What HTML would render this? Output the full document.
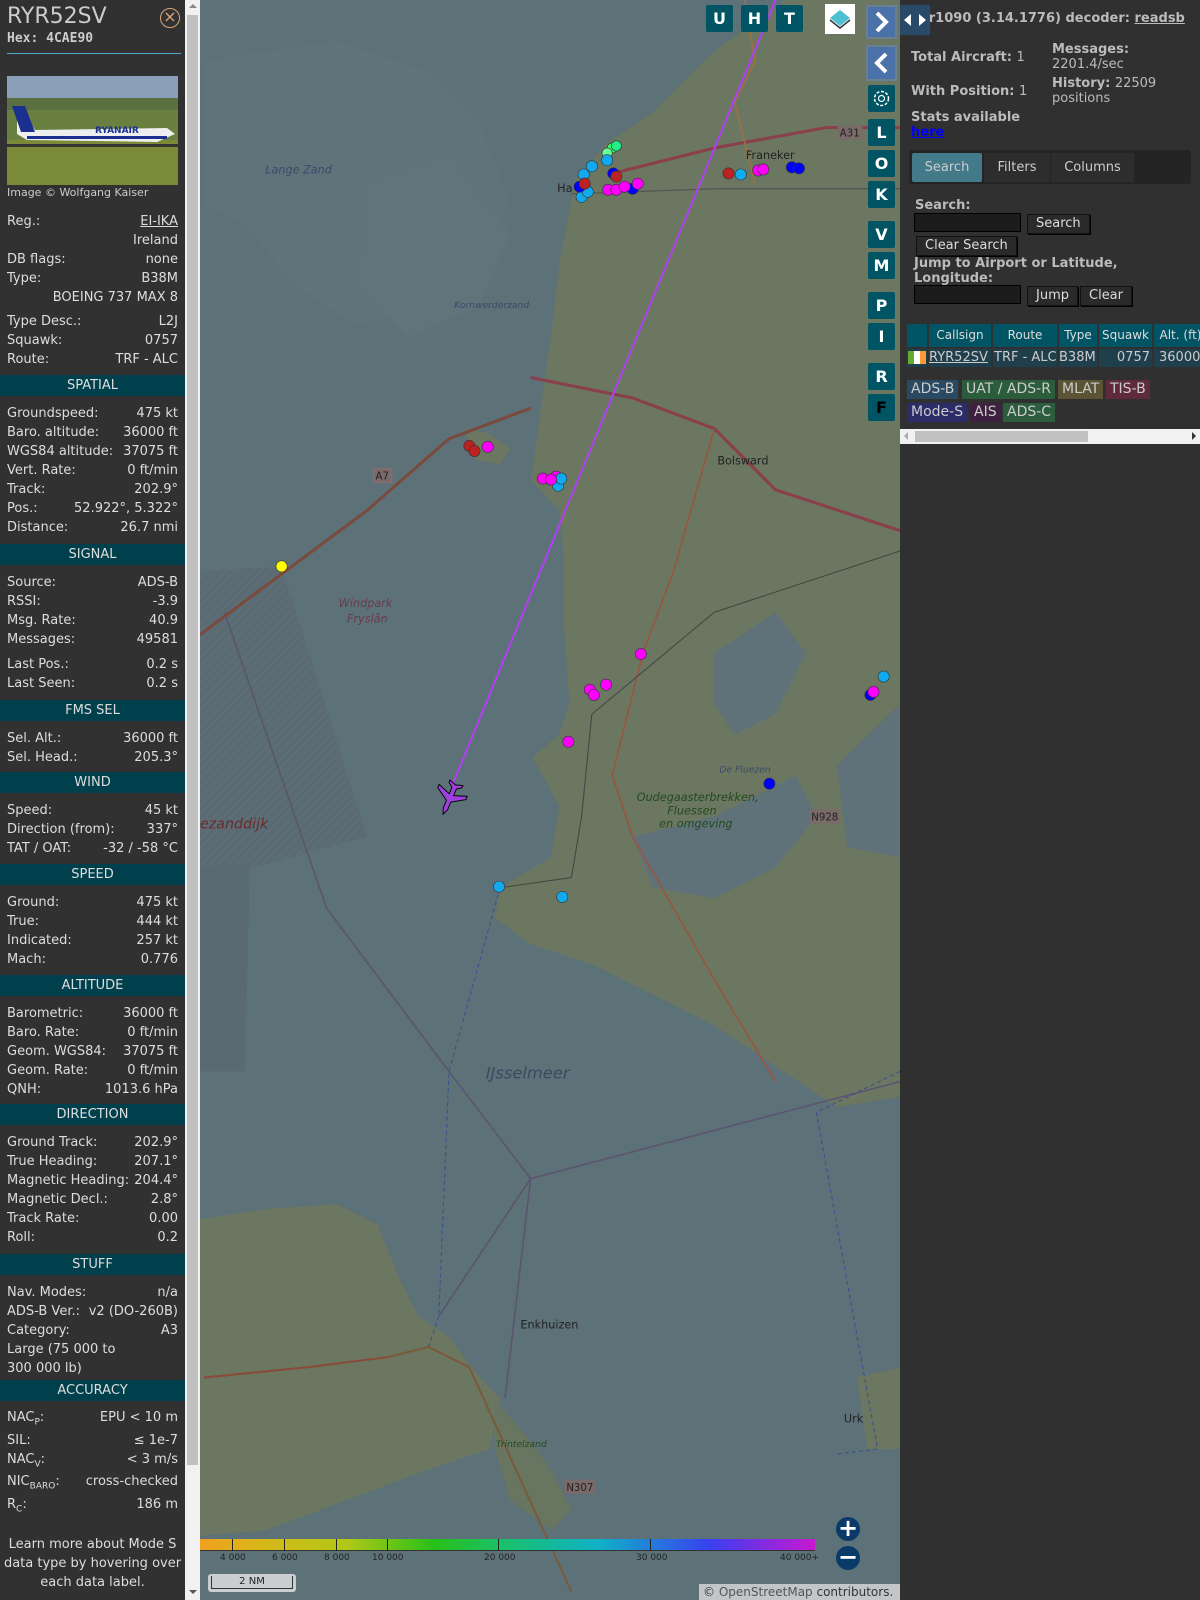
<!DOCTYPE html>
<html><head><meta charset="utf-8"><style>
*{box-sizing:border-box;margin:0;padding:0}
body{width:1200px;height:1600px;overflow:hidden;background:#5d7178;font-family:"DejaVu Sans","Liberation Sans",sans-serif;font-size:13px;color:#ddd;position:relative}
#map{position:absolute;left:0;top:0;width:1200px;height:1600px}
#lp{position:absolute;left:0;top:0;width:185px;height:1600px;background:#313131}
#sb{position:absolute;left:185px;top:0;width:15px;height:1600px;background:#f1f1f1}
#sb .th{position:absolute;left:2px;top:15px;width:11px;height:1450px;background:#c1c1c1}
.abs{position:absolute}
.r{height:19px;line-height:19px;position:relative;padding:0 7px;white-space:nowrap}
.r .v{position:absolute;right:7px;top:0}
.ra{position:absolute;left:0;width:185px;height:19px;line-height:19px;padding:0 7px;white-space:nowrap}
.ra .v{position:absolute;right:7px;top:0}
.ra sub{font-size:9px;line-height:0}
.h{height:21px;line-height:21px;background:#00404d;text-align:center;color:#ddd;font-size:13px}
.sec{position:absolute;left:0;width:185px}
.sec .rows{padding-top:8px}
#rp{position:absolute;left:900px;top:0;width:300px;height:1600px;background:#303030}
.b{font-weight:bold;color:#bbb}
.mb{position:absolute;width:27px;height:27px;background:#005463;color:#fff;font-weight:bold;font-size:16px;text-align:center;line-height:27px;border-radius:2px}
.btn{position:absolute;background:#2a2a2a;border:1px solid #111;color:#ddd;height:20px;line-height:18px;padding:0 8px;font-size:13px;box-shadow:1px 1px 0 #000}
.inp{position:absolute;background:#1c1c1c;border:1px solid #000;height:19px}
.lg{position:absolute;height:19px;line-height:19px;padding:0 4px;font-size:14px;color:#ccc}
.td{position:absolute;height:18px;background:#1f3f4d;white-space:nowrap;overflow:hidden}
</style></head><body>
<svg id="map" viewBox="0 0 1176 1568" preserveAspectRatio="none">
<defs><pattern id="hz" width="6" height="6" patternUnits="userSpaceOnUse" patternTransform="rotate(45)"><rect width="6" height="6" fill="#5a6a72"/><line x1="0" y1="0" x2="0" y2="6" stroke="#62707a" stroke-width="2"/></pattern></defs>
<rect width="1176" height="1568" fill="#5d7178"/>
<path d="M200,60 L330,40 L420,70 L470,120 L500,200 L460,260 L420,300 L350,320 L290,280 L240,220 L200,200Z" fill="#5f737a"/>
<path d="M360,180 L440,150 L500,230 L470,300 L400,330 L350,280Z" fill="#60747b"/>
<path d="M770,0 L882,0 L882,1075 L820,1085 L760,1045 L700,1005 L640,975 L580,945 L520,925 L485,900 L490,870 L540,840 L548,790 L522,742 L548,720 L558,690 L553,620 L552,540 L548,500 L520,470 L525,440 L530,400 L540,330 L548,260 L558,205 L565,175 L595,140 L640,110 L700,50Z" fill="#6b7760"/>
<path d="M455,420 L480,425 L500,440 L490,455 L465,450Z" fill="#6b7760"/>
<path d="M700,640 L760,600 L790,640 L760,700 L720,720 L700,690Z" fill="#5f7279"/>
<path d="M620,820 L700,800 L780,760 L800,800 L760,850 L700,880 L640,870Z" fill="#5f7279"/>
<path d="M820,750 L882,690 L882,840 L830,830Z" fill="#5f7279"/>
<path d="M196,1195 L260,1185 L330,1180 L370,1200 L390,1250 L410,1290 L440,1310 L470,1350 L490,1370 L480,1420 L420,1440 L340,1470 L260,1500 L196,1505Z" fill="#6b7760"/>
<path d="M483,1370 L510,1400 L540,1440 L560,1480 L540,1500 L500,1470 L485,1420Z" fill="#687560"/>
<path d="M840,1350 L882,1340 L882,1420 L850,1420Z" fill="#6b7760"/>
<path d="M196,560 L276,555 L360,820 L250,850 L196,850Z" fill="url(#hz)" opacity="0.8"/>
<path d="M196,850 L245,845 L240,1050 L196,1050Z" fill="#5a6a72"/>
<g stroke="#5a5470" stroke-width="1.5" fill="none">
<path d="M220,600 L320,890 L440,1050 L520,1155 L882,1060"/>
<path d="M520,1155 L430,1290"/>
<path d="M520,1155 L495,1370"/>
</g>
<g stroke="#3a4f90" stroke-width="1" fill="none" stroke-dasharray="4,3">
<path d="M490,870 L440,1050 L430,1290 L420,1320"/>
<path d="M882,1050 L800,1090 L860,1420 L820,1425"/>
</g>
<g fill="none">
<path d="M196,622 L360,500 L440,430 L520,400" stroke="#7a4a3c" stroke-width="3"/>
<path d="M560,190 L700,185 L882,185" stroke="#555" stroke-width="1.2"/>
<path d="M600,170 L700,145 L810,125 L882,125" stroke="#8a3f4c" stroke-width="3"/>
<path d="M520,370 L620,390 L700,420 L760,480 L882,520" stroke="#8a3f4c" stroke-width="3"/>
<path d="M700,420 L660,560 L630,640 L600,760 L620,820 L700,960 L760,1060" stroke="#9a5540" stroke-width="1.6"/>
<path d="M580,700 L700,600 L882,540" stroke="#444" stroke-width="1"/>
<path d="M490,870 L560,860 L570,800 L580,700" stroke="#444" stroke-width="1"/>
<path d="M730,0 L740,60 L720,100 L740,180" stroke="#a07040" stroke-width="1.5"/>
<path d="M380,1330 L420,1320 L460,1340 L560,1560" stroke="#7a5a3a" stroke-width="2"/>
<path d="M200,1350 L300,1340 L380,1330" stroke="#8a4a3a" stroke-width="2"/>
</g>
<g font-family="DejaVu Sans" font-size="11" font-style="italic" fill="#6a3a50">
<text x="332" y="595">Windpark</text><text x="340" y="610">Fryslân</text>
</g>
<text x="196" y="812" font-family="DejaVu Sans" font-size="14" font-style="italic" fill="#6a2a2a">ezanddijk</text>
<text x="260" y="170" font-family="DejaVu Sans" font-size="11" font-style="italic" fill="#3a4a6a">Lange Zand</text>
<text x="445" y="302" font-family="DejaVu Sans" font-size="9" font-style="italic" fill="#3a4a6a">Kornwerderzand</text>
<text x="476" y="1057" font-family="DejaVu Sans" font-size="16" font-style="italic" fill="#3a4a60">IJsselmeer</text>
<text x="624" y="785" font-family="DejaVu Sans" font-size="11" font-style="italic" fill="#234a20">Oudegaasterbrekken,</text>
<text x="654" y="798" font-family="DejaVu Sans" font-size="11" font-style="italic" fill="#234a20">Fluessen</text>
<text x="646" y="811" font-family="DejaVu Sans" font-size="11" font-style="italic" fill="#234a20">en omgeving</text>
<text x="705" y="757" font-family="DejaVu Sans" font-size="9" font-style="italic" fill="#3a4a6a">De Fluezen</text>
<g font-family="DejaVu Sans" font-size="11" fill="#222">
<text x="731" y="156">Franeker</text><text x="703" y="455">Bolsward</text><text x="510" y="1302">Enkhuizen</text><text x="827" y="1394">Urk</text><text x="546" y="188">Ha</text>
</g>
<text x="486" y="1418" font-family="DejaVu Sans" font-size="9" font-style="italic" fill="#234a20">Trintelzand</text>
<g font-family="DejaVu Sans" font-size="10"><rect x="366" y="459" width="18" height="14" fill="#7a6a6a" stroke="#8a7070"/><text x="368" y="470" fill="#222">A7</text>
<rect x="821" y="123" width="24" height="14" fill="#7a6a6a"/><text x="823" y="134" fill="#222">A31</text>
<rect x="793" y="793" width="30" height="14" fill="#7a6a6a"/><text x="795" y="804" fill="#222">N928</text>
<rect x="553" y="1450" width="30" height="14" fill="#7a6a6a"/><text x="555" y="1461" fill="#222">N307</text></g>
<line x1="760" y1="0" x2="443" y2="770" stroke="#b040f0" stroke-width="2"/>
<g transform="translate(441,782) rotate(203) scale(1.15)"><path d="M0,-15 L2,-10 L2,-3 L13,4 L13,7 L2,3 L2,9 L6,12 L6,14 L0,12 L-6,14 L-6,12 L-2,9 L-2,3 L-13,7 L-13,4 L-2,-3 L-2,-10 Z" fill="#a040e0" stroke="#000" stroke-width="0.8"/></g>
<g stroke="#333" stroke-width="0.6">
<circle cx="600" cy="145" r="5" fill="#3f6"/><circle cx="595" cy="150" r="5" fill="#6f9"/><circle cx="604" cy="143" r="5" fill="#2e8"/>
<circle cx="595" cy="157" r="5.5" fill="#1ae"/><circle cx="580" cy="163" r="5.5" fill="#1ae"/><circle cx="572" cy="171" r="5.5" fill="#1ae"/><circle cx="570" cy="193" r="5.5" fill="#1ae"/><circle cx="576" cy="188" r="5.5" fill="#1ae"/>
<circle cx="568" cy="183" r="5.5" fill="#00f"/><circle cx="601" cy="170" r="5.5" fill="#00f"/><circle cx="620" cy="185" r="5.5" fill="#00f"/>
<circle cx="604" cy="173" r="5.5" fill="#b22"/><circle cx="573" cy="180" r="5.5" fill="#b22"/>
<circle cx="596" cy="186" r="5.5" fill="#f0f"/><circle cx="604" cy="186" r="5.5" fill="#f0f"/><circle cx="625" cy="180" r="5.5" fill="#f0f"/><circle cx="612" cy="183" r="5.5" fill="#f0f"/>
<circle cx="714" cy="170" r="5.5" fill="#b22"/><circle cx="726" cy="171" r="5.5" fill="#1ae"/><circle cx="743" cy="167" r="5.5" fill="#f0f"/><circle cx="748" cy="166" r="5.5" fill="#f0f"/><circle cx="776" cy="164" r="5.5" fill="#00f"/><circle cx="783" cy="165" r="5.5" fill="#00f"/>
<circle cx="460" cy="437" r="5.5" fill="#b22"/><circle cx="465" cy="442" r="5.5" fill="#b22"/><circle cx="478" cy="438" r="5.5" fill="#f0f"/>
<circle cx="532" cy="469" r="5.5" fill="#f0f"/><circle cx="545" cy="467" r="5.5" fill="#f0f"/><circle cx="547" cy="476" r="5.5" fill="#1ae"/><circle cx="550" cy="469" r="5.5" fill="#1ae"/><circle cx="540" cy="470" r="5.5" fill="#f0f"/>
<circle cx="276" cy="555" r="5.5" fill="#ff0"/>
<circle cx="628" cy="641" r="5.5" fill="#f0f"/><circle cx="578" cy="676" r="5.5" fill="#f0f"/><circle cx="582" cy="681" r="5.5" fill="#f0f"/><circle cx="594" cy="671" r="5.5" fill="#f0f"/><circle cx="557" cy="727" r="5.5" fill="#f0f"/>
<circle cx="866" cy="663" r="5.5" fill="#1ae"/><circle cx="853" cy="681" r="5.5" fill="#00f"/><circle cx="856" cy="678" r="5.5" fill="#f0f"/>
<circle cx="754" cy="768" r="5.5" fill="#00f"/><circle cx="489" cy="869" r="5.5" fill="#1ae"/><circle cx="551" cy="879" r="5.5" fill="#1ae"/>
</g>
</svg>

<div class="abs" style="left:200px;top:1539px;width:615px;height:12px;background:linear-gradient(90deg,#f0a020 0%,#d8b818 10%,#b0c818 24%,#28c018 38%,#18c070 50%,#10b0c8 65%,#3a40f0 83%,#c818d0 100%);border-bottom:1px solid #333"></div>
<div class="abs" style="left:232px;top:1539px;width:1px;height:12px;background:#222"></div>
<div class="abs" style="left:284px;top:1539px;width:1px;height:12px;background:#222"></div>
<div class="abs" style="left:336px;top:1539px;width:1px;height:12px;background:#222"></div>
<div class="abs" style="left:387px;top:1539px;width:1px;height:12px;background:#222"></div>
<div class="abs" style="left:498px;top:1539px;width:1px;height:12px;background:#222"></div>
<div class="abs" style="left:650px;top:1539px;width:1px;height:12px;background:#222"></div>
<div class="abs" style="top:1553px;font-size:9px;color:#222;left:220px">4 000</div>
<div class="abs" style="top:1553px;font-size:9px;color:#222;left:272px">6 000</div>
<div class="abs" style="top:1553px;font-size:9px;color:#222;left:324px">8 000</div>
<div class="abs" style="top:1553px;font-size:9px;color:#222;left:372px">10 000</div>
<div class="abs" style="top:1553px;font-size:9px;color:#222;left:484px">20 000</div>
<div class="abs" style="top:1553px;font-size:9px;color:#222;left:636px">30 000</div>
<div class="abs" style="top:1553px;font-size:9px;color:#222;left:780px">40 000+</div>
<div class="abs" style="left:208px;top:1574px;width:88px;height:18px;background:rgba(230,230,230,.8);border-radius:3px;padding:2px 3px"><div style="border:1px solid #333;border-top:none;height:13px;text-align:center;font-size:10px;line-height:12px;color:#222">2 NM</div></div>
<div class="abs" style="left:836px;top:1517px;width:24px;height:24px;border-radius:50%;background:#0a3a6a;color:#fff;font-size:24px;line-height:22px;text-align:center;font-weight:bold">+</div>
<div class="abs" style="left:836px;top:1546px;width:24px;height:24px;border-radius:50%;background:#0a3a6a;color:#fff;font-size:24px;line-height:22px;text-align:center;font-weight:bold">−</div>
<div class="abs" style="left:699px;top:1584px;width:201px;height:16px;background:rgba(220,220,220,.8);font-size:12px;color:#333;line-height:16px;padding-left:4px">© <span style="color:#555">OpenStreetMap</span> contributors.</div>

<div class="mb" style="left:706px;top:5px">U</div>
<div class="mb" style="left:741px;top:5px">H</div>
<div class="mb" style="left:776px;top:5px">T</div>
<div class="abs" style="left:825px;top:4px;width:30px;height:30px;background:#fff"><svg width="30" height="30"><path d="M15,6 L25,14 L15,22 L5,14Z" fill="#4cc0d0"/><path d="M5,16 L15,24 L25,16" fill="none" stroke="#333" stroke-width="1.5"/></svg></div>
<div class="abs" style="left:866px;top:5px;width:31px;height:34px;background:#6a7f8f;padding:2px"><div style="background:#4a72a8;height:30px"><svg width="27" height="30"><path d="M9,6 L18,15 L9,24" fill="none" stroke="#fff" stroke-width="4"/></svg></div></div>
<div class="abs" style="left:866px;top:45px;width:31px;height:36px;background:#6a7f8f;padding:2px"><div style="background:#4a72a8;height:32px"><svg width="27" height="32"><path d="M18,7 L9,16 L18,25" fill="none" stroke="#fff" stroke-width="4"/></svg></div></div>
<div class="mb" style="left:868px;top:85px"><svg width="27" height="27"><circle cx="13.5" cy="13.5" r="7" fill="none" stroke="#fff" stroke-width="1.5" stroke-dasharray="3,1.6"/><circle cx="13.5" cy="13.5" r="3" fill="none" stroke="#fff" stroke-width="1.2"/></svg></div>
<div class="mb" style="left:868px;top:119px">L</div>
<div class="mb" style="left:868px;top:150px">O</div>
<div class="mb" style="left:868px;top:181px">K</div>
<div class="mb" style="left:868px;top:221px">V</div>
<div class="mb" style="left:868px;top:252px">M</div>
<div class="mb" style="left:868px;top:292px">P</div>
<div class="mb" style="left:868px;top:323px">I</div>
<div class="mb" style="left:868px;top:363px">R</div>
<div class="mb" style="left:868px;top:394px;color:#000">F</div>

<div id="lp">
<div class="abs" style="left:7px;top:4px;font-size:22px;color:#ccc">RYR52SV</div>
<div class="abs" style="left:160px;top:8px;width:20px;height:20px;border:1.5px solid #d8a878;border-radius:50%;color:#d8a878;text-align:center;line-height:16px;font-size:16px">×</div>
<div class="abs" style="left:7px;top:31px;font-family:'DejaVu Sans Mono',monospace;font-weight:bold;font-size:13px;color:#ccc">Hex: 4CAE90</div>
<div class="abs" style="left:7px;top:53px;width:174px;height:1px;background:#5ac"></div>
<svg class="abs" style="left:7px;top:76px" width="171" height="109"><rect width="171" height="22" fill="#8aa0b8"/><rect y="22" width="171" height="12" fill="#5a7040"/><rect y="34" width="171" height="30" fill="#6a8040"/><rect y="64" width="171" height="45" fill="#7a8a38"/><rect y="68" width="171" height="3" fill="#333"/><path d="M10,40 L20,40 L28,54 L160,52 L168,58 L150,66 L20,64 L10,58Z" fill="#eee"/><path d="M5,30 L18,30 L28,56 L14,56Z" fill="#1a3090"/><text x="88" y="57" font-size="9" font-weight="bold" fill="#1a3090" font-family="DejaVu Sans">RYANAIR</text><rect x="20" y="60" width="140" height="3" fill="#1a3090"/></svg>
<div class="abs" style="left:7px;top:186px;font-size:11px;color:#ccc">Image © Wolfgang Kaiser</div>
<div class="sec" style="top:212px">
<div class="r">Reg.:<span class="v" style="text-decoration:underline">EI-IKA</span></div>
<div class="r"><span class="v">Ireland</span></div>
<div class="r">DB flags:<span class="v">none</span></div>
<div class="r">Type:<span class="v">B38M</span></div>
<div class="r"><span class="v">BOEING 737 MAX 8</span></div>
<div class="r" style="margin-top:5px">Type Desc.:<span class="v">L2J</span></div>
<div class="r">Squawk:<span class="v">0757</span></div>
<div class="r">Route:<span class="v">TRF - ALC</span></div>
</div>
<div class="sec" style="top:375px"><div class="h">SPATIAL</div><div class="rows">
<div class="r">Groundspeed:<span class="v">475 kt</span></div>
<div class="r">Baro. altitude:<span class="v">36000 ft</span></div>
<div class="r">WGS84 altitude:<span class="v">37075 ft</span></div>
<div class="r">Vert. Rate:<span class="v">0 ft/min</span></div>
<div class="r">Track:<span class="v">202.9°</span></div>
<div class="r">Pos.:<span class="v">52.922°, 5.322°</span></div>
<div class="r">Distance:<span class="v">26.7 nmi</span></div></div></div>
<div class="sec" style="top:544px"><div class="h">SIGNAL</div><div class="rows">
<div class="r">Source:<span class="v">ADS-B</span></div>
<div class="r">RSSI:<span class="v">-3.9</span></div>
<div class="r">Msg. Rate:<span class="v">40.9</span></div>
<div class="r">Messages:<span class="v">49581</span></div>
<div class="r" style="margin-top:6px">Last Pos.:<span class="v">0.2 s</span></div>
<div class="r">Last Seen:<span class="v">0.2 s</span></div></div></div>
<div class="sec" style="top:700px"><div class="h">FMS SEL</div><div class="rows">
<div class="r">Sel. Alt.:<span class="v">36000 ft</span></div>
<div class="r">Sel. Head.:<span class="v">205.3°</span></div></div></div>
<div class="sec" style="top:772px"><div class="h">WIND</div><div class="rows">
<div class="r">Speed:<span class="v">45 kt</span></div>
<div class="r">Direction (from):<span class="v">337°</span></div>
<div class="r">TAT / OAT:<span class="v">-32 / -58 °C</span></div></div></div>
<div class="sec" style="top:864px"><div class="h">SPEED</div><div class="rows">
<div class="r">Ground:<span class="v">475 kt</span></div>
<div class="r">True:<span class="v">444 kt</span></div>
<div class="r">Indicated:<span class="v">257 kt</span></div>
<div class="r">Mach:<span class="v">0.776</span></div></div></div>
<div class="sec" style="top:975px"><div class="h">ALTITUDE</div><div class="rows">
<div class="r">Barometric:<span class="v">36000 ft</span></div>
<div class="r">Baro. Rate:<span class="v">0 ft/min</span></div>
<div class="r">Geom. WGS84:<span class="v">37075 ft</span></div>
<div class="r">Geom. Rate:<span class="v">0 ft/min</span></div>
<div class="r">QNH:<span class="v">1013.6 hPa</span></div></div></div>
<div class="sec" style="top:1104px"><div class="h">DIRECTION</div><div class="rows">
<div class="r">Ground Track:<span class="v">202.9°</span></div>
<div class="r">True Heading:<span class="v">207.1°</span></div>
<div class="r">Magnetic Heading:<span class="v">204.4°</span></div>
<div class="r">Magnetic Decl.:<span class="v">2.8°</span></div>
<div class="r">Track Rate:<span class="v">0.00</span></div>
<div class="r">Roll:<span class="v">0.2</span></div></div></div>
<div class="sec" style="top:1254px"><div class="h">STUFF</div><div class="rows">
<div class="r">Nav. Modes:<span class="v">n/a</span></div>
<div class="r">ADS-B Ver.:<span class="v">v2 (DO-260B)</span></div>
<div class="r">Category:<span class="v">A3</span></div>
<div class="r">Large (75 000 to</div>
<div class="r">300 000 lb)</div></div></div>
<div class="sec" style="top:1380px;height:220px"><div class="h">ACCURACY</div>
<div class="ra" style="top:28px">NAC<sub>P</sub>:<span class="v">EPU &lt; 10 m</span></div>
<div class="ra" style="top:51px">SIL:<span class="v">≤ 1e-7</span></div>
<div class="ra" style="top:70px">NAC<sub>V</sub>:<span class="v">&lt; 3 m/s</span></div>
<div class="ra" style="top:92px">NIC<sub>BARO</sub>:<span class="v">cross-checked</span></div>
<div class="ra" style="top:115px">R<sub>C</sub>:<span class="v">186 m</span></div>
<div class="abs" style="top:155px;left:0;width:185px;text-align:center;line-height:19px">Learn more about Mode S data type by hovering over each data label.</div>
</div>
</div>
<div id="sb"><div class="th"></div><div class="abs" style="left:4px;top:4px;width:0;height:0;border:4px solid transparent;border-bottom-color:#888;border-top:none"></div><div class="abs" style="left:4px;top:1590px;width:0;height:0;border:4px solid transparent;border-top-color:#555;border-bottom:none"></div></div>

<div id="rp">
<div class="abs b" style="left:20px;top:11px;color:#bbb">ar1090 (3.14.1776) decoder: <u>readsb</u></div>
<div class="abs" style="left:0;top:5px;width:30px;height:30px;background:#2a4a6a"><svg width="30" height="30"><path d="M4,15 L11,9 L11,21Z M26,15 L19,9 L19,21Z" fill="#fff"/></svg></div>
<div class="abs b" style="left:11px;top:50px">Total Aircraft: <span style="font-weight:normal">1</span></div>
<div class="abs b" style="left:11px;top:84px">With Position: <span style="font-weight:normal">1</span></div>
<div class="abs b" style="left:11px;top:110px">Stats available</div>
<div class="abs b" style="left:11px;top:125px;color:#00f;text-decoration:underline">here</div>
<div class="abs b" style="left:152px;top:42px">Messages:</div>
<div class="abs" style="left:152px;top:57px;color:#bbb">2201.4/sec</div>
<div class="abs b" style="left:152px;top:76px">History: <span style="font-weight:normal">22509</span></div>
<div class="abs" style="left:152px;top:91px;color:#bbb">positions</div>
<div class="abs" style="left:9px;top:150px;width:282px;height:34px;background:#242424;border-radius:3px"></div>
<div class="abs" style="left:12px;top:153px;width:70px;height:29px;background:#437a8a;border-radius:2px;text-align:center;line-height:29px;color:#ccc">Search</div>
<div class="abs" style="left:84px;top:153px;width:66px;height:29px;background:#2d2d2d;text-align:center;line-height:29px;color:#ccc">Filters</div>
<div class="abs" style="left:151px;top:153px;width:83px;height:29px;background:#2d2d2d;text-align:center;line-height:29px;color:#ccc">Columns</div>
<div class="abs b" style="left:15px;top:198px">Search:</div>
<div class="inp" style="left:14px;top:213px;width:107px"></div>
<div class="btn" style="left:127px;top:214px">Search</div>
<div class="btn" style="left:16px;top:236px">Clear Search</div>
<div class="abs b" style="left:14px;top:256px;width:280px;line-height:15px">Jump to Airport or Latitude, Longitude:</div>
<div class="inp" style="left:14px;top:285px;width:107px"></div>
<div class="btn" style="left:127px;top:286px">Jump</div>
<div class="btn" style="left:180px;top:286px">Clear</div>
<div class="abs" style="left:7px;top:324px;width:293px;height:23px;font-size:12px;color:#ddd">
<div class="abs" style="left:0;width:20px;height:23px;background:#005463"></div>
<div class="abs" style="left:22px;width:62px;height:23px;background:#005463;text-align:center;line-height:23px">Callsign</div>
<div class="abs" style="left:86px;width:64px;height:23px;background:#005463;text-align:center;line-height:23px">Route</div>
<div class="abs" style="left:152px;width:38px;height:23px;background:#005463;text-align:center;line-height:23px">Type</div>
<div class="abs" style="left:192px;width:53px;height:23px;background:#005463;text-align:center;line-height:23px">Squawk</div>
<div class="abs" style="left:247px;width:53px;height:23px;background:#005463;text-align:center;line-height:23px;white-space:nowrap">Alt. (ft)</div>
</div>
<div class="abs" style="left:7px;top:349px;width:293px;height:18px;font-size:13px;color:#ccc;line-height:18px">
<div class="td" style="left:0;width:20px;padding:2px 1px"><span style="display:inline-block;width:6px;height:13px;background:#6a3"></span><span style="display:inline-block;width:6px;height:13px;background:#fff"></span><span style="display:inline-block;width:6px;height:13px;background:#f93"></span></div>
<div class="td" style="left:22px;width:62px;text-decoration:underline">RYR52SV</div>
<div class="td" style="left:86px;width:64px;padding-left:1px">TRF - ALC</div>
<div class="td" style="left:152px;width:38px">B38M</div>
<div class="td" style="left:192px;width:53px;text-align:right;padding-right:2px">0757</div>
<div class="td" style="left:247px;width:53px;padding-left:5px">36000</div>
</div>
<div class="lg" style="left:7px;top:380px;background:#294a62">ADS-B</div>
<div class="lg" style="left:62px;top:380px;background:#2b5c3c">UAT / ADS-R</div>
<div class="lg" style="left:158px;top:380px;background:#5a5334">MLAT</div>
<div class="lg" style="left:206px;top:380px;background:#5e2a3c">TIS-B</div>
<div class="lg" style="left:7px;top:403px;background:#2b2c68">Mode-S</div>
<div class="lg" style="left:70px;top:403px;background:#3e2040">AIS</div>
<div class="lg" style="left:103px;top:403px;background:#2c5d3d">ADS-C</div>
<div class="abs" style="left:0;top:429px;width:300px;height:15px;background:#f1f1f1"><div class="abs" style="left:15px;top:2px;width:173px;height:11px;background:#c1c1c1"></div><div class="abs" style="left:4px;top:3px;border:4px solid transparent;border-right-color:#aaa;border-left:none"></div><div class="abs" style="right:4px;top:3px;border:4px solid transparent;border-left-color:#333;border-right:none"></div></div>
</div>
</body></html>
